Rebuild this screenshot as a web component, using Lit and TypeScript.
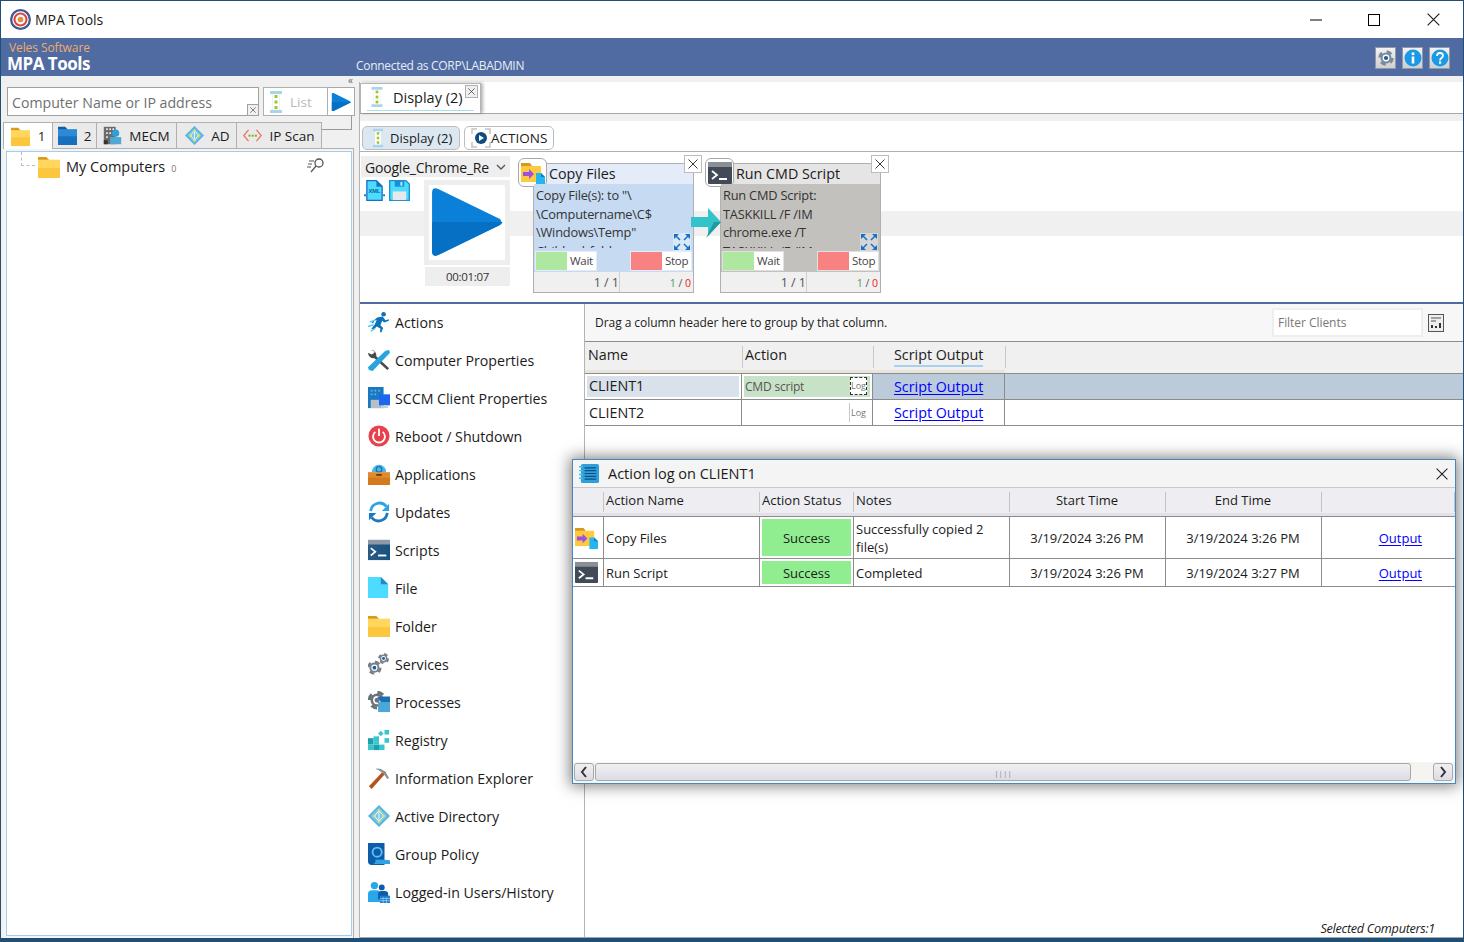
import { LitElement, html, svg, css } from 'lit';
import { customElement } from 'lit/decorators.js';

// small icon set, all 24x24 viewBox unless noted
const folder = (top: string, a: string, b: string) => html`<svg class="ic" viewBox="0 0 24 24">
  <path d="M0 1h9l3 3v4H0z" fill="${top}" /><rect y="4" width="24" height="20" fill="${a}" /><rect y="13" width="24" height="11" fill="${b}" />
</svg>`;
const yellowFolder = () => folder('#d99a1e', '#ffd75e', '#fcc73c');
const blueFolder = () => folder('#0f5d9f', '#2b8ad6', '#1870bd');

const listIcon = () => html`<svg class="ic" viewBox="0 0 24 24">
  <path d="M6 1h12v3h-2.5v16H18v3H6v-3h2.5V4H6z" fill="#a8d4ec" /><rect x="8.5" y="4" width="7" height="16" fill="#fff" />
  <g fill="#a6c226"><rect x="10.5" y="5" width="3" height="3" /><rect x="10.5" y="10.500" width="3" height="3" /><rect x="10.5" y="16" width="3" height="3" /></g>
</svg>`;

const playIcon = () => html`<svg class="ic" viewBox="0 0 24 24">
  <path d="M1 2.500Q1 .5 3 1.300L23 11Q24 12 23 13L3 22.700Q1 23.500 1 21.500z" fill="#0a80d8" />
  <path d="M1 12h22.800Q23.800 12.500 23 13L3 22.700Q1 23.500 1 21.500z" fill="#0670c4" />
</svg>`;

const mecmIcon = () => html`<svg class="ic" viewBox="0 0 24 24">
  <rect x="1" y="1" width="15" height="22" fill="#6c6c6c" />
  <g fill="#fff"><rect x="4" y="3" width="2" height="2" /><rect x="8" y="3" width="2" height="2" /><rect x="12" y="3" width="2" height="2" /><rect x="4" y="8" width="2" height="2" /><rect x="8" y="8" width="2" height="2" /><rect x="4" y="13" width="2" height="2" /></g>
  <circle cx="16" cy="9" r="4.500" fill="#2f9fd8" /><rect x="9" y="14" width="14" height="9" fill="#4fa9d3" /><rect x="1" y="18" width="5" height="5" fill="#333" />
</svg>`;

const adIcon = () => html`<svg class="ic" viewBox="0 0 24 24">
  <path d="M12 0l12 12-12 12L0 12z" fill="#59b4e0" /><path d="M12 3l9 9-9 9-9-9z" fill="#7cc6ea" />
  <path d="M12 6v12M12 6l-5 6 5 6 5-6z" fill="none" stroke="#fff" stroke-width="1" />
  <g fill="#e6e84e"><circle cx="12" cy="6" r="1.500" /><circle cx="7" cy="12" r="1.500" /><circle cx="17" cy="12" r="1.500" /><circle cx="12" cy="18" r="1.500" /></g>
</svg>`;

const ipIcon = () => html`<svg class="ic" viewBox="0 0 24 24">
  <path d="M7 5l-6 7 6 7M17 5l6 7-6 7" fill="none" stroke="#ec6f66" stroke-width="1.600" />
  <g fill="#7cb518"><rect x="7" y="11" width="2.500" height="2.500" /><rect x="11" y="11" width="2.500" height="2.500" /><rect x="15" y="11" width="2.500" height="2.500" /></g>
</svg>`;

const copyIcon = () => html`<svg class="ic" viewBox="0 0 24 24">
  <path d="M0 2h9l2 3v4H0z" fill="#d49a1e" /><rect y="5" width="20" height="16" fill="#fcc93f" />
  <path d="M2 11h6V8l5 5-5 5v-3H2z" fill="#a04fe0" />
  <path d="M15 12h5l4 4v8h-9z" fill="#25b6f2" /><path d="M20 12l4 4h-4z" fill="#0c7fc0" />
</svg>`;

const termIcon = () => html`<svg class="ic" viewBox="0 0 24 24">
  <rect y="1" width="24" height="22" rx="1" fill="#414a56" /><rect y="1" width="24" height="5" fill="#8b9097" />
  <path d="M4 10l5 4-5 4" fill="none" stroke="#fff" stroke-width="1.800" /><rect x="11" y="17" width="8" height="2" fill="#fff" />
</svg>`;

const scriptsIcon = () => html`<svg class="ic" viewBox="0 0 24 24">
  <defs><linearGradient id="sg" x1="0" x2="1"><stop offset="0" stop-color="#2b5b86" /><stop offset="1" stop-color="#17527e" /></linearGradient></defs>
  <rect y="1" width="24" height="22" fill="url(#sg)" /><rect y="1" width="24" height="5" fill="#8d99a6" />
  <path d="M3 10l5 4-5 4" fill="none" stroke="#fff" stroke-width="1.800" /><rect x="11" y="17" width="9" height="2" fill="#fff" />
</svg>`;

const runIcon = () => html`<svg class="ic" viewBox="0 0 24 24">
  <circle cx="17" cy="3.500" r="2.500" fill="#0d72bb" />
  <path d="M10 7l6-1 3 4 4-1-.5 2-5 1.500-2-2-2 5 3 3-2 5-1.500-.5 .5-4-4-2-3 3-3-.5 4-5 2-5-2.500 1-1.500 3-1.500-1z" fill="#0d72bb" />
  <g stroke="#5bc8f5" stroke-width="1.500"><path d="M2 12l6-2M0 17l6-2M3 22l5-3" /></g>
</svg>`;

const toolsIcon = () => html`<svg class="ic" viewBox="0 0 24 24">
  <path d="M3 1a6 6 0 0 1 6 7l14 13-2 2L7 10a6 6 0 0 1-7-6l4 2 3-2-1-3z" fill="#4a4a4a" />
  <path d="M23 1l1 3-19 20-4-1-1-3 19-18z" fill="#25a4e0" />
</svg>`;

const sccmIcon = () => html`<svg class="ic" viewBox="0 0 24 24">
  <rect y="0" width="17" height="23" fill="#1a78c2" /><rect x="3" y="14" width="11" height="9" fill="#b7bec6" />
  <g fill="#62aee0"><rect x="3" y="3" width="2" height="2" /><rect x="7" y="3" width="2" height="2" /><rect x="11" y="3" width="2" height="2" /><rect x="3" y="7" width="2" height="2" /><rect x="7" y="7" width="2" height="2" /></g>
  <rect x="12" y="8" width="12" height="12" fill="#1f66ee" /><rect x="14" y="20" width="8" height="3" fill="#c6cdd4" />
</svg>`;

const powerIcon = () => html`<svg class="ic" viewBox="0 0 24 24">
  <circle cx="12" cy="12" r="11.500" fill="#e8414b" />
  <path d="M8 7.500a6.500 6.500 0 1 0 8 0" fill="none" stroke="#fff" stroke-width="2" /><rect x="11" y="4" width="2" height="8" fill="#fff" />
</svg>`;

const appsIcon = () => html`<svg class="ic" viewBox="0 0 24 24">
  <path d="M4 10a8 8 0 0 1 16 0z" fill="#4cb8e8" /><circle cx="12" cy="7" r="3" fill="none" stroke="#1976b8" stroke-width="1.500" />
  <rect y="10" width="24" height="14" fill="#e08a2e" /><rect y="16" width="24" height="8" fill="#d37a1f" /><rect x="9" y="12" width="6" height="2" fill="#6a3d10" />
</svg>`;

const updatesIcon = () => html`<svg class="ic" viewBox="0 0 24 24">
  <path d="M3 11a9.500 9.500 0 0 1 17-5" fill="none" stroke="#2aa3e8" stroke-width="3" /><path d="M23 3v8h-8z" fill="#2aa3e8" />
  <path d="M21 13a9.500 9.500 0 0 1-17 5" fill="none" stroke="#1a78c2" stroke-width="3" /><path d="M1 21v-8h8z" fill="#1a78c2" />
</svg>`;

const fileIcon = () => html`<svg class="ic" viewBox="0 0 24 24">
  <path d="M0 0h14l8 8v15H0z" fill="#4ddcff" /><path d="M14 0l8 8h-8z" fill="#2b86c8" />
</svg>`;

// nested svg pieces need the svg tag or they land in the html namespace
const gear = (cx: number, cy: number, r: number, c: string, d: string) => svg`
  <circle cx="${cx}" cy="${cy}" r="${r}" fill="none" stroke="${c}" stroke-width="${r * 0.4}" stroke-dasharray="${r * 0.8} ${r * 0.77}" />
  <circle cx="${cx}" cy="${cy}" r="${r * 0.85}" fill="${c}" /><circle cx="${cx}" cy="${cy}" r="${r * 0.52}" fill="#fff" /><circle cx="${cx}" cy="${cy}" r="${r * 0.32}" fill="${d}" />`;

const servicesIcon = () => html`<svg class="ic" viewBox="0 0 24 24">
  ${gear(7, 16, 6.500, '#7a7f85', '#1460a8')}${gear(17, 6, 5, '#7a7f85', '#1460a8')}
</svg>`;

const procIcon = () => html`<svg class="ic" viewBox="0 0 24 24">
  ${gear(10, 10, 8.500, '#6d7378', '#6d7378')}<path d="M10 6h14v6H14z" fill="#1c6fb5" />
  <rect x="11" y="12" width="13" height="11" fill="#4aa7d8" />
</svg>`;

const regIcon = () => html`<svg class="ic" viewBox="0 0 24 24">
  <g fill="#37c5cf"><rect x="0" y="10" width="6" height="7" fill="#1fa0a8" /><rect x="0" y="17" width="6" height="6" /><rect x="6" y="8" width="6" height="6" /><rect x="6" y="17" width="6" height="6" fill="#1fa0a8" /><rect x="12" y="17" width="6" height="6" /><rect x="6" y="14" width="6" height="3" />
  <path d="M11 5l3-3 3 3-3 3z" /><rect x="18" y="1" width="5" height="5" /><rect x="18" y="10" width="5" height="5" /></g>
</svg>`;

const pickIcon = () => html`<svg class="ic" viewBox="0 0 24 24">
  <path d="M1 21L17 4l3 2L4 24z" fill="#b4531e" />
  <path d="M8 2q9-2 15 10l-2 1q-4-6-6-7-3-3-7-4z" fill="#8b9298" />
</svg>`;

const gpIcon = () => html`<svg class="ic" viewBox="0 0 24 24">
  <path d="M0 0h18v24H4q-4 0-4-4z" fill="#0d5ca8" /><circle cx="10" cy="10" r="5" fill="none" stroke="#5cc0f0" stroke-width="2" />
  <path d="M8 18q12 0 16 1v4H6q3-2 2-5z" fill="#2fa3e6" />
</svg>`;

const usersIcon = () => html`<svg class="ic" viewBox="0 0 24 24">
  <circle cx="7" cy="5" r="4" fill="#29a7ea" /><path d="M0 23V14q0-4 5-4h4q5 0 5 4v9z" fill="#29a7ea" />
  <circle cx="15" cy="7" r="3.200" fill="#0d5ca8" /><path d="M11 20v-6q0-3 4-3h3q4 0 4 3v6z" fill="#0d5ca8" />
  <rect x="13" y="16" width="11" height="8" fill="#1c7fce" />
  <path d="M13 19h11M13 21.500h11M16.500 18v6M20 18v6" stroke="#cfe9fb" stroke-width=".6" />
</svg>`;

const expandIcon = () => html`<svg class="expand" viewBox="0 0 18 18">
  <path d="M1 6V1h5zM17 6V1h-5zM1 12v5h5zM17 12v5h-5z" fill="#1670c4" />
  <path d="M3 3l4 4M15 3l-4 4M3 15l4-4M15 15l-4-4" stroke="#1670c4" stroke-width="1.500" />
</svg>`;

const cross = (s = 10) => html`<svg width="${s}" height="${s}" viewBox="0 0 10 10"><path d="M.5.5l9 9M9.500.5l-9 9" stroke="#222" stroke-width=".9" fill="none" /></svg>`;

const menu = [
  ['Actions', runIcon],
  ['Computer Properties', toolsIcon],
  ['SCCM Client Properties', sccmIcon],
  ['Reboot / Shutdown', powerIcon],
  ['Applications', appsIcon],
  ['Updates', updatesIcon],
  ['Scripts', scriptsIcon],
  ['File', fileIcon],
  ['Folder', yellowFolder],
  ['Services', servicesIcon],
  ['Processes', procIcon],
  ['Registry', regIcon],
  ['Information Explorer', pickIcon],
  ['Active Directory', adIcon],
  ['Group Policy', gpIcon],
  ['Logged-in Users/History', usersIcon],
] as const;

@customElement('app-root')
export class AppRoot extends LitElement {
  static styles = css`
    :host {
      display: block;
      width: 1464px;
      height: 942px;
      overflow: hidden;
      font-family: "Open Sans", "Noto Sans", sans-serif;
      font-size: 14px;
      color: #1b1b1b;
    }
    * { box-sizing: border-box; }
    .ic { display: block; width: 22px; height: 22px; flex: none; }
    a { color: #0000ff; text-decoration: underline; text-underline-offset: 2px; }

    .win {
      position: relative;
      display: flex;
      flex-direction: column;
      width: 1464px;
      height: 942px;
      background: #f0f0f0;
      border: 1px solid #1f4f74;
      border-width: 1px 1px 4px 1px;
    }
    .titlebar { height: 37px; flex: none; background: #fff; display: flex; align-items: center; padding-left: 9px; }
    .titlebar .logo { width: 21px; height: 21px; margin-right: 4px; }
    .titlebar .name { flex: 1; font-size: 14px; }
    .winbtn { width: 59px; display: flex; justify-content: center; }
    .winbtn.mx { padding-right: 2px; }

    .banner { height: 38px; flex: none; background: #4f6ba2; display: flex; color: #fff; padding: 3px 13px 0 6px; }
    .brand { width: 349px; flex: none; }
    .veles { font-size: 12px; line-height: 13px; color: #eeac68; margin-left: 2px; letter-spacing: -0.1px; }
    .mpa { font-size: 17px; font-weight: 700; line-height: 19px; letter-spacing: -0.500px; }
    .conn { flex: 1; font-size: 12px; padding-top: 16px; letter-spacing: -0.300px; color: #e8edf5; }
    .topbtns { display: flex; gap: 6px; padding-top: 6px; }
    .topbtn { width: 21px; height: 22px; background: linear-gradient(#f2f2f2, #cfcfcf); border: 1px solid #8f9aa8; display: flex; align-items: center; justify-content: center; }
    .topbtn svg { width: 18px; height: 18px; display: block; }

    .body { flex: 1; display: flex; min-height: 0; }

    /* left column */
    .left { width: 358px; flex: none; display: flex; flex-direction: column; padding-left: 1px; }
    .collapse { height: 11px; text-align: right; font-size: 10px; line-height: 9px; padding-right: 6px; color: #666; }
    .searchrow { display: flex; height: 29px; margin-left: 5px; width: 347px; }
    .search { position: relative; width: 252px; height: 29px; background: #fff; border: 1px solid #a0a0a0; color: #6f6f6f; font-size: 14.150px; padding: 6px 4px; line-height: 18px; flex: none; }
    .clearx { position: absolute; right: -1px; bottom: -1px; width: 12px; height: 12px; border: 1px solid #a0a0a0; background: #f0f0f0; display: flex; align-items: center; justify-content: center; }
    .listbtn { margin-left: 4px; width: 65px; flex: none; background: #fff; border: 1px solid #b0b0b0; display: flex; align-items: center; gap: 2px; color: #b8b8c0; font-size: 13.500px; }
    .listbtn .ic { width: 24px; height: 24px; }
    .gobtn { width: 27px; flex: none; background: #fff; border: 1px solid #a8a8a8; border-left: 0; display: flex; align-items: center; justify-content: center; }
    .gobtn .ic { width: 20px; height: 20px; }

    .tabs { display: flex; margin-top: 6px; margin-left: 1px; height: 26px; }
    .tab { display: flex; align-items: center; justify-content: center; gap: 7px; height: 26px; background: #eaeaea; border: 1px solid #b0b0b0; border-left: 0; border-bottom: 0; font-size: 13.500px; flex: none; }
    .tab .ic { width: 19px; height: 19px; }
    .tab.on { background: #fff; border-left: 1px solid #b0b0b0; height: 27px; z-index: 1; gap: 8px; }
    .t1 { width: 50px; }
    .t2 { width: 44px; }
    .t3 { width: 80px; }
    .t4 { width: 60px; padding-left: 2px; }
    .t5 { width: 85px; }
    .tabfill { width: 30px; height: 14px; border: 1px solid #9a9a9a; border-width: 0 1px 1px 0; margin-top: -6px; }

    .treewrap { flex: 1; margin-left: 1px; margin-right: 5px; background: #f4f4f4; border: 1px solid #b0b0b0; border-width: 1px 1px 0 0; padding: 2px 1px 0 3px; min-height: 0; }
    .tree { height: 785px; background: #fff; border: 1px solid #a8cbec; position: relative; display: flex; align-items: flex-start; padding: 4px 0 0 31px; font-size: 14.500px; }
    .tree .ic { margin-right: 6px; }
    .tree .txt { line-height: 22px; }
    .tree .zero { font-size: 9px; color: #777; margin: 6px 0 0 6px; flex: 1; }
    .tree .find { width: 18px; height: 16px; margin: 1px 26px 0 0; }
    .dash { position: absolute; left: 14px; top: 0; width: 14px; height: 14px; border: 1px dashed #bbb; border-width: 0 0 1px 1px; }

    /* right column */
    .right { flex: 1; display: flex; flex-direction: column; min-width: 0; margin-top: 6px; border-left: 1px solid #b4b4b4; }
    .rtabs { height: 32px; flex: none; background: #fff; border-bottom: 1px solid #a8a8a8; padding: 1px 0 0 0; }
    .rtab { position: relative; width: 121px; height: 30px; background: #fff; border: 1px solid #b4b4b4; border-bottom: 0; box-shadow: 2px 0 3px rgba(0,0,0,.3); display: flex; align-items: center; gap: 5px; padding: 0 0 3px 5px; font-size: 14.500px; }
    .rtab::after { content: ''; position: absolute; left: 6px; right: 6px; bottom: 2px; height: 1px; background: #a6e0ea; }
    .rtab .x { position: absolute; right: 2px; top: 1px; width: 13px; height: 13px; border: 1px solid #b0b0b0; background: #f0f0f0; display: flex; align-items: center; justify-content: center; }

    .pills { height: 38px; flex: none; border-bottom: 1px solid #b0b0b0; display: flex; gap: 4px; padding: 12px 0 0 2px; background: linear-gradient(#f0f0f0 7px, #fff 7px); }
    .pill { height: 24px; display: flex; align-items: center; border: 1px solid #bdbdbd; border-radius: 5px; background: #fff; font-size: 13.500px; padding: 0 6px; white-space: nowrap; }
    .pill.on { background: #dbe8f1; width: 98px; gap: 2px; font-size: 13px; padding: 0 0 0 5px; }
    .pill .ic { width: 20px; height: 20px; }

    .flow { height: 152px; flex: none; background: linear-gradient(#fff 59px, #f0f0f0 59px, #f0f0f0 84px, #fff 84px); border-bottom: 2px solid #4f6ba2; display: flex; padding: 4px 0 0 1px; }
    .runner { width: 149px; flex: none; }
    .select { width: 149px; height: 21px; background: #eeeeee; display: flex; align-items: center; padding: 1px 0 0 4px; font-size: 14px; letter-spacing: -0.200px; white-space: nowrap; overflow: hidden; }
    .select span { width: 125px; overflow: hidden; }
    .select svg { margin-left: 6px; }
    .runrow { display: flex; margin-top: 3px; }
    .tools { width: 63px; display: flex; gap: 4px; padding-left: 3px; }
    .tools .ic { width: 21px; height: 21px; }
    .playbox { width: 86px; height: 85px; border: 5px solid #eeeeee; background: #fff; }
    .playbox .ic { width: 74px; height: 74px; }
    .time { margin: 2px 0 0 64px; width: 85px; height: 19px; background: #eeeeee; text-align: center; font-size: 11.500px; line-height: 20px; letter-spacing: -0.300px; color: #333; }

    .card { position: relative; width: 161px; height: 130px; margin-top: 7px; border: 1px solid #b0b0b0; background: #f0f0f0; display: flex; flex-direction: column; flex: none; }
    .card.c1 { margin-left: 23px; }
    .card.c2 { margin-left: 26px; }
    .chead { height: 20px; padding-left: 15px; font-size: 14.300px; line-height: 19px; flex: none; }
    .c1 .chead { background: #e3ecf8; }
    .c2 .chead { background: #e6e5e5; }
    .cbody { height: 88px; flex: none; position: relative; padding: 2px 0 0 2px; font-size: 12.800px; line-height: 18.500px; letter-spacing: -0.200px; color: #333; }
    .c1 .cbody { background: #c6daf2; }
    .c2 .cbody { background: #c3c1be; }
    .cline { height: 62px; overflow: hidden; white-space: pre-line; width: 150px; }
    .expand { position: absolute; right: 2px; top: 49px; width: 18px; height: 18px; background: rgba(255,255,255,.35); }
    .chips { position: absolute; left: 2px; right: 2px; bottom: 2px; display: flex; justify-content: space-between; }
    .chip { width: 60px; height: 18px; background: #fff; display: flex; font-size: 11.500px; line-height: 17px; letter-spacing: -0.300px; color: #444; box-shadow: 0 0 0 1px rgba(255,255,255,.5); }
    .chip i { display: block; width: 31px; height: 18px; margin-right: 3px; flex: none; }
    .chip.w i { background: #aee8a0; }
    .chip.s i { background: #f88282; }
    .cfoot { flex: 1; display: flex; font-size: 11.500px; color: #555; text-align: right; }
    .cfoot > div:first-child { width: 86px; border-right: 1px solid #d0d0d0; padding: 2px 0 0 0; font-size: 12.500px; }
    .cfoot > div:last-child { flex: 1; padding: 4px 2px 0 0; font-size: 10.500px; }
    .g { color: #4a9a5a; }
    .r { color: #e82020; }
    .cicon { position: absolute; left: -16px; top: -6px; width: 29px; height: 29px; background: #fff; border: 1px solid #a8a8a8; border-radius: 6px; display: flex; align-items: center; justify-content: center; }
    .cicon .ic { width: 24px; height: 24px; }
    .cx { position: absolute; right: -9px; top: -9px; width: 18px; height: 18px; background: #fff; border: 1px solid #bdbdbd; display: flex; align-items: center; justify-content: center; }
    .arrow { position: absolute; left: -30px; top: 41px; width: 31px; height: 34px; z-index: 2; }

    .lower { flex: 1; display: flex; min-height: 0; background: #fff; border-bottom: 1px solid #9aa5b5; }
    .menu { width: 225px; flex: none; border-right: 1px solid #b4b4b4; }
    .mi { height: 36px; margin-bottom: 2px; display: flex; align-items: center; gap: 5px; padding-left: 8px; font-size: 14.200px; white-space: nowrap; }

    .gridwrap { flex: 1; display: flex; flex-direction: column; min-width: 0; position: relative; }
    .groupbar { height: 38px; flex: none; background: #f7f7f7; border-bottom: 1px solid #8c8c8c; display: flex; align-items: center; padding: 0 19px 0 10px; font-size: 12px; letter-spacing: -0.050px; }
    .groupbar .hint { flex: 1; }
    .filter { width: 151px; height: 29px; background: #fff; border: 2px solid #eeeeee; color: #777; font-size: 12px; line-height: 25px; padding-left: 4px; margin-right: 5px; }
    .grid { display: grid; grid-template-columns: 157px 131px 132px 1fr; }
    .gh { height: 32px; background: #f0f0f0; border-bottom: 1px solid #8c8c8c; padding: 3px 0 0 3px; font-size: 14.300px; position: relative; }
    .gh + .gh::before { content: ''; position: absolute; left: 0; top: 4px; height: 22px; width: 1px; background: #c8c8c8; }
    .gh::after { content: ''; position: absolute; left: 0; right: 0; bottom: 0; height: 3px; background: #e8e5da; }
    .gh.last::after { display: none; }
    .gh.out { padding-left: 21px; }
    .gh.out span { border-bottom: 2px solid #a8d0f0; display: inline-block; line-height: 19px; padding-bottom: 1px; }
    .gc { height: 26px; border-bottom: 1px solid #8c8c8c; border-right: 1px solid #8c8c8c; display: flex; align-items: center; font-size: 14.300px; padding-left: 4px; }
    .gc.end { border-right: 0; }
    .sel { background: #bccbda; }
    .gc.namecell { background: #fff; padding: 2px; }
    .gc.namecell.sel2 div { background: #d9e1ea; width: 100%; height: 100%; padding-left: 2px; line-height: 20px; }
    .gc.namecell div { width: 100%; padding-left: 2px; }
    .gc.act { padding: 2px 2px; background: #fff; position: relative; }
    .actbar { flex: 1; height: 21px; background: #c8e2c8; color: #555; font-size: 12px; line-height: 21px; padding-left: 1px; letter-spacing: -0.200px; }
    .logb { width: 18px; height: 19px; font-size: 9px; color: #777; line-height: 19px; text-align: center; border-left: 1px solid #c8c8c8; margin-left: auto; margin-right: 3px; }
    .logb.foc { background: #fff; border: 1px dashed #333; margin: 0; position: absolute; right: 5px; top: 3px; height: 18px; line-height: 16px; width: 17px; }
    .gc.lnk { padding-left: 21px; }
    .selected { position: absolute; right: 28px; bottom: 0; font-style: italic; font-size: 12.700px; letter-spacing: -0.300px; }

    .dialog { position: absolute; left: 571px; top: 458px; width: 884px; height: 325px; background: #fff; border: 1px solid #4a87c0; box-shadow: 0 0 14px 2px rgba(0,0,0,.5); display: flex; flex-direction: column; }
    .dtitle { height: 28px; flex: none; background: #f4f4f4; border-bottom: 1px solid #c8c8c8; display: flex; align-items: center; padding: 0 7px 0 6px; font-size: 14.500px; gap: 8px; }
    .dtitle .t { flex: 1; }
    .dtitle .ic { width: 21px; height: 21px; }
    .dgrid { display: grid; grid-template-columns: 31px 156px 94px 156px 156px 156px 1fr; font-size: 13px; }
    .dh { height: 28px; background: #eeeef2; border-bottom: 3px solid #e2e2e6; box-shadow: 0 1px 0 #8c8c8c; padding-top: 3px; padding-left: 2px; position: relative; line-height: 18px; }
    .dh::before { content: ''; position: absolute; right: 0; top: 4px; width: 1px; height: 20px; background: #c4c4c8; }
    .dh.ctr { text-align: center; padding-right: 4px; }
    .dc { border-bottom: 1px solid #8c8c8c; border-right: 1px solid #8c8c8c; padding: 0 2px; display: flex; align-items: center; line-height: 18px; margin-top: 1px; }
    .r1 { height: 42px; }
    .r2 { height: 28px; margin-top: 0; }
    .dc.last { border-right: 0; justify-content: flex-end; padding-right: 33px; }
    .dc.ctr { justify-content: center; padding-right: 3px; }
    .dc.ico { padding: 0 0 0 2px; }
    .dc.ico .ic { width: 23px; height: 23px; }
    .dc.st { padding: 2px; }
    .dc.st div { width: 100%; height: 100%; background: #90ee90; display: flex; align-items: center; justify-content: center; }
    .dfill { flex: 1; }
    .sbar { height: 21px; flex: none; background: #f4f4f0; display: flex; padding: 1px 2px 2px 1px; }
    .sb { width: 20px; background: linear-gradient(#f0f0f4, #dcdce4); border: 1px solid #a8a8a8; border-radius: 3px; display: flex; align-items: center; justify-content: center; }
    .thumb { width: 816px; margin-left: 1px; background: linear-gradient(#f0f0f4, #dcdce6); border: 1px solid #a8a8a8; border-radius: 3px; display: flex; align-items: center; justify-content: center; color: #888; font-size: 8px; letter-spacing: 0; }
    .sbgap { flex: 1; }
  `;

  render() {
    return html`<div class="win">
      <div class="titlebar">
        <svg class="logo" viewBox="0 0 22 22">
          <circle cx="11" cy="11" r="9.800" fill="#fff" stroke="#3f5a8f" stroke-width="2.400" />
          <circle cx="11" cy="11" r="6.300" fill="#fff" stroke="#d8473f" stroke-width="2.200" />
          <circle cx="11" cy="11" r="3" fill="#e98d3e" />
        </svg>
        <div class="name">MPA Tools</div>
        <div class="winbtn"><svg width="14" height="14" viewBox="0 0 14 14"><path d="M1 7h12" stroke="#000" /></svg></div>
        <div class="winbtn mx"><svg width="14" height="14" viewBox="0 0 14 14"><rect x="1.500" y="1.500" width="11" height="11" fill="none" stroke="#000" /></svg></div>
        <div class="winbtn">${cross(13)}</div>
      </div>
      <div class="banner">
        <div class="brand"><div class="veles">Veles Software</div><div class="mpa">MPA Tools</div></div>
        <div class="conn">Connected as CORP\\LABADMIN</div>
        <div class="topbtns">
          <div class="topbtn"><svg viewBox="0 0 18 18">${gear(9, 9, 6.500, '#7c8a99', '#1460a8')}</svg></div>
          <div class="topbtn"><svg viewBox="0 0 18 18"><circle cx="9" cy="9" r="8.500" fill="#1a9ae6" /><rect x="7.700" y="7.500" width="2.600" height="7" fill="#fff" /><rect x="7.700" y="3.500" width="2.600" height="2.600" fill="#fff" /></svg></div>
          <div class="topbtn"><svg viewBox="0 0 18 18"><circle cx="9" cy="9" r="8.500" fill="#1a9ae6" /><path d="M6 7q0-3 3-3t3 2.800q0 1.500-1.800 2.400Q9 10 9 11.500" fill="none" stroke="#fff" stroke-width="1.800" /><rect x="8" y="12.500" width="2.200" height="2.200" fill="#fff" /></svg></div>
        </div>
      </div>
      <div class="body">
        <div class="left">
          <div class="collapse">«</div>
          <div class="searchrow">
            <div class="search">Computer Name or IP address<div class="clearx">${cross(6)}</div></div>
            <div class="listbtn">${listIcon()}List</div>
            <div class="gobtn">${playIcon()}</div>
          </div>
          <div class="tabs">
            <div class="tab on t1">${yellowFolder()}<span>1</span></div>
            <div class="tab t2">${blueFolder()}<span>2</span></div>
            <div class="tab t3">${mecmIcon()}<span>MECM</span></div>
            <div class="tab t4">${adIcon()}<span>AD</span></div>
            <div class="tab t5">${ipIcon()}<span>IP Scan</span></div>
            <div class="tabfill"></div>
          </div>
          <div class="treewrap">
            <div class="tree">
              <div class="dash"></div>
              ${yellowFolder()}<span class="txt">My Computers</span><span class="zero">0</span>
              <svg class="find" viewBox="0 0 18 16"><circle cx="12" cy="6" r="4" fill="none" stroke="#555" stroke-width="1.300" /><path d="M9 9l-5 6M2 4h5M1 7h4M0 10h4" stroke="#555" stroke-width="1.200" /></svg>
            </div>
          </div>
        </div>

        <div class="right">
          <div class="rtabs">
            <div class="rtab">${listIcon()}<span>Display (2)</span><div class="x">${cross(7)}</div></div>
          </div>
          <div class="pills">
            <div class="pill on">${listIcon()}<span>Display (2)</span></div>
            <div class="pill">
              <svg class="ic" viewBox="0 0 20 20">
                <path d="M1 6V1h5M19 6V1h-5M1 14v5h5M19 14v5h-5" fill="none" stroke="#c4c4c4" stroke-width="1.500" />
                <circle cx="10" cy="10" r="6" fill="#114c7e" /><path d="M8 7l5 3-5 3z" fill="#fff" />
              </svg>
              <span>ACTIONS</span>
            </div>
          </div>
          <div class="flow">
            <div class="runner">
              <div class="select"><span>Google_Chrome_Re</span><svg width="10" height="7" viewBox="0 0 10 7"><path d="M1 1l4 4 4-4" fill="none" stroke="#555" stroke-width="1.300" /></svg></div>
              <div class="runrow">
                <div class="tools">
                  <svg class="ic" viewBox="0 0 22 22"><path d="M3 .7h10l6 6v14.600H3z" fill="#4ddcff" stroke="#1670c4" stroke-width="1.400" /><path d="M13 1l6 6h-6z" fill="#1670c4" /><rect x="0" y="15" width="2" height="2" fill="#1670c4" /><rect x="20" y="15" width="2" height="2" fill="#1670c4" /><text x="11" y="14" font-size="6" font-weight="700" text-anchor="middle" fill="#0f5f9c" font-family="Liberation Sans">XML</text></svg>
                  <svg class="ic" viewBox="0 0 22 22"><path d="M.7 .7h17l3.600 3.600v17H.7z" fill="#4ddcff" stroke="#1a8fd8" stroke-width="1.400" /><rect x="6" y="1" width="10" height="6" fill="#1a8fd8" /><rect x="12" y="2" width="2" height="4" fill="#bfefff" /><rect x="4" y="12" width="14" height="9" fill="#e8e8e8" /></svg>
                </div>
                <div class="playbox">${playIcon()}</div>
              </div>
              <div class="time">00:01:07</div>
            </div>
            <div class="card c1">
              <div class="cicon">${copyIcon()}</div>
              <div class="cx">${cross(10)}</div>
              <div class="chead">Copy Files</div>
              <div class="cbody">
                <div class="cline">Copy File(s): to "\\
                  \\Computername\\C$
                  \\Windows\\Temp"
                  Child subfolders</div>
                ${expandIcon()}
                <div class="chips"><div class="chip w"><i></i>Wait</div><div class="chip s"><i></i>Stop</div></div>
              </div>
              <div class="cfoot"><div>1 / 1</div><div><span class="g">1</span> / <span class="r">0</span></div></div>
            </div>
            <div class="card c2">
              <svg class="arrow" viewBox="0 0 31 34"><path d="M0 12h17V3l13 14-13 14V22H0z" fill="#33c3cb" /><path d="M15 33l8-16h7L17 31z" fill="#1e9aa1" /></svg>
              <div class="cicon">${termIcon()}</div>
              <div class="cx">${cross(10)}</div>
              <div class="chead">Run CMD Script</div>
              <div class="cbody">
                <div class="cline">Run CMD Script:
                  TASKKILL /F /IM
                  chrome.exe /T
                  TASKKILL /F /IM</div>
                ${expandIcon()}
                <div class="chips"><div class="chip w"><i></i>Wait</div><div class="chip s"><i></i>Stop</div></div>
              </div>
              <div class="cfoot"><div>1 / 1</div><div><span class="g">1</span> / <span class="r">0</span></div></div>
            </div>
          </div>
          <div class="lower">
            <div class="menu">
              ${menu.map(([label, icon]) => html`<div class="mi">${icon()}<span>${label}</span></div>`)}
            </div>
            <div class="gridwrap">
              <div class="groupbar">
                <div class="hint">Drag a column header here to group by that column.</div>
                <div class="filter">Filter Clients</div>
                <svg width="16" height="18" viewBox="0 0 16 18"><rect x=".5" y=".5" width="15" height="17" fill="#eee" stroke="#555" /><path d="M3 4h10M3 7h5" stroke="#555" /><path d="M4 14v-3M8 14v-2M12 14V9" stroke="#333" stroke-width="2" /></svg>
              </div>
              <div class="grid">
                <div class="gh">Name</div><div class="gh">Action</div><div class="gh out"><span>Script Output</span></div><div class="gh last"></div>
                <div class="gc namecell sel2"><div>CLIENT1</div></div>
                <div class="gc act"><div class="actbar">CMD script</div><div class="logb foc">Log</div></div>
                <div class="gc lnk sel"><a>Script Output</a></div><div class="gc end sel"></div>
                <div class="gc namecell"><div>CLIENT2</div></div>
                <div class="gc act"><div class="logb">Log</div></div>
                <div class="gc lnk"><a>Script Output</a></div><div class="gc end"></div>
              </div>
              <div class="selected">Selected Computers:1</div>
            </div>
          </div>
        </div>
      </div>

      <div class="dialog">
        <div class="dtitle">
          <svg class="ic" viewBox="0 0 22 22"><rect x="2" y="1" width="19" height="20" rx="2" fill="#2f9fd8" /><path d="M6 5h12M6 8h12M6 11h12M6 14h12M6 17h12" stroke="#0d4f86" stroke-width="1.300" /><path d="M0 4h4M0 8h4M0 12h4M0 16h4" stroke="#4dbcea" stroke-width="1.500" /></svg>
          <span class="t">Action log on CLIENT1</span>${cross(12)}
        </div>
        <div class="dgrid">
          <div class="dh"></div><div class="dh">Action Name</div><div class="dh">Action Status</div><div class="dh">Notes</div>
          <div class="dh ctr">Start Time</div><div class="dh ctr">End Time</div><div class="dh"></div>

          <div class="dc ico r1">${copyIcon()}</div><div class="dc r1">Copy Files</div><div class="dc st r1"><div>Success</div></div>
          <div class="dc r1">Successfully copied 2 file(s)</div><div class="dc ctr r1">3/19/2024 3:26 PM</div><div class="dc ctr r1">3/19/2024 3:26 PM</div><div class="dc last r1"><a>Output</a></div>

          <div class="dc ico r2">${termIcon()}</div><div class="dc r2">Run Script</div><div class="dc st r2"><div>Success</div></div>
          <div class="dc r2">Completed</div><div class="dc ctr r2">3/19/2024 3:26 PM</div><div class="dc ctr r2">3/19/2024 3:27 PM</div><div class="dc last r2"><a>Output</a></div>
        </div>
        <div class="dfill"></div>
        <div class="sbar">
          <div class="sb"><svg width="8" height="12" viewBox="0 0 8 12"><path d="M6 1L2 6l4 5" fill="none" stroke="#333" stroke-width="2" /></svg></div>
          <div class="thumb">||||</div>
          <div class="sbgap"></div>
          <div class="sb"><svg width="8" height="12" viewBox="0 0 8 12"><path d="M2 1l4 5-4 5" fill="none" stroke="#333" stroke-width="2" /></svg></div>
        </div>
      </div>
    </div>`;
  }
}
